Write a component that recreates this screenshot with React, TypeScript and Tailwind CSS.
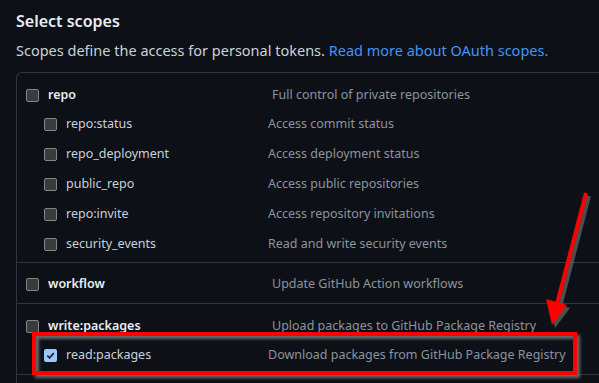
import React from "react";

type Scope = { name: string; desc: string; checked?: boolean };

const repoScopes: Scope[] = [
  { name: "repo:status", desc: "Access commit status" },
  { name: "repo_deployment", desc: "Access deployment status" },
  { name: "public_repo", desc: "Access public repositories" },
  { name: "repo:invite", desc: "Access repository invitations" },
  { name: "security_events", desc: "Read and write security events" },
];

const Checkbox: React.FC<{ checked?: boolean }> = ({ checked }) =>
  checked ? (
    <span className="flex h-[13px] w-[13px] shrink-0 items-center justify-center rounded-[2px] bg-[#99c8ff]">
      <svg width="11" height="11" viewBox="0 0 12 12">
        <path d="M2.5 6.2 L5 8.6 L9.6 3.4" fill="none" stroke="#1b1f24" strokeWidth="1.8" />
      </svg>
    </span>
  ) : (
    <span className="h-[13px] w-[13px] shrink-0 rounded-[2px] border border-[#858585] bg-[#3b3b3b]" />
  );

const MainRow: React.FC<{ scope: Scope; className?: string }> = ({ scope, className }) => (
  <div className={`flex items-center pl-[9px] ${className || ""}`}>
    <Checkbox checked={scope.checked} />
    <span className="ml-[9px] w-[224px] text-[12.5px] leading-[18px] font-semibold text-[#e6edf3]">{scope.name}</span>
    <span className="text-[12.5px] leading-[18px] text-[#8b949e]">{scope.desc}</span>
  </div>
);

const SubRow: React.FC<{ scope: Scope }> = ({ scope }) => (
  <div className="flex h-[30px] items-center pl-[27px]">
    <Checkbox checked={scope.checked} />
    <span className="ml-[9px] w-[202px] text-[12.5px] leading-[18px] text-[#c9d1d9]">{scope.name}</span>
    <span className="text-[12.5px] leading-[18px] text-[#8b949e]">{scope.desc}</span>
  </div>
);

export default function App() {
  return (
    <div
      className="relative h-[383px] w-[599px] overflow-hidden bg-[#0d1117] pl-4"
      style={{ fontFamily: '"Noto Sans", "Open Sans", sans-serif' }}
    >
      <h3 className="pt-[10px] text-[16px] leading-[22px] font-semibold text-[#e6edf3]">Select scopes</h3>
      <p className="mt-[7px] text-[14.5px] leading-[22px] text-[#c9d1d9]">
        Scopes define the access for personal tokens.{" "}
        <a className="text-[#4493f8]">Read more about OAuth scopes.</a>
      </p>

      <div className="mt-[11px] w-[640px] rounded-tl-md border-t border-l border-[#30363d]">
        <div className="pt-[8px] pb-[3px]">
          <MainRow scope={{ name: "repo", desc: "Full control of private repositories" }} className="h-[28px]" />
          {repoScopes.map((s) => (
            <SubRow key={s.name} scope={s} />
          ))}
        </div>
        <div className="flex h-[41px] items-center border-t border-[#30363d] pt-[2px]">
          <MainRow scope={{ name: "workflow", desc: "Update GitHub Action workflows" }} className="w-full" />
        </div>
        <div className="border-t border-[#30363d] pt-[8px] pb-[4px]">
          <MainRow scope={{ name: "write:packages", desc: "Upload packages to GitHub Package Registry" }} className="h-[28px]" />
          <SubRow scope={{ name: "read:packages", desc: "Download packages from GitHub Package Registry", checked: true }} />
        </div>
        <div className="h-[20px] border-t border-[#30363d]" />
      </div>

      {/* annotation: red box */}
      <div className="absolute top-[332px] left-[32px] h-[43px] w-[545px] border-4 border-[#ff0000] shadow-[3px_3px_3px_rgba(120,120,120,0.85),inset_3px_3px_3px_rgba(120,120,120,0.85)]" />

      {/* annotation: arrow */}
      <svg className="absolute top-0 left-0" width="599" height="383">
        <g transform="translate(3,3)" opacity="0.6">
          <line x1="586" y1="193" x2="557" y2="304" stroke="#777" strokeWidth="4" />
          <polygon points="546,299 567,305 552,325" fill="#777" />
        </g>
        <line x1="586" y1="193" x2="557" y2="304" stroke="#ff0000" strokeWidth="4" />
        <polygon points="546,299 567,305 552,325" fill="#ff0000" />
      </svg>
    </div>
  );
}
